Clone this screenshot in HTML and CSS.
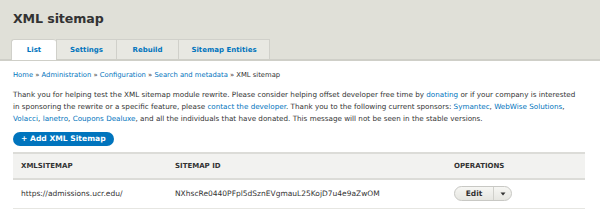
FILE: index.html
```html
<!DOCTYPE html>
<html>
<head>
<meta charset="utf-8">
<link rel="stylesheet" href="styles.css">
</head>
<body>
<header class="head">
  <h1 class="title">XML sitemap</h1>
  <nav class="tabs">
    <a class="tab active">List</a>
    <a class="tab">Settings</a>
    <a class="tab">Rebuild</a>
    <a class="tab">Sitemap Entities</a>
  </nav>
</header>
<main class="content">
  <div class="crumbs"><a>Home</a> » <a>Administration</a> » <a>Configuration</a> » <a>Search and metadata</a> » XML sitemap</div>
  <p class="msg"><span class="ln">Thank you for helping test the XML sitemap module rewrite. Please consider helping offset developer free time by <a>donating</a> or if your company is interested</span><span class="ln">in sponsoring the rewrite or a specific feature, please <a>contact the developer</a>. Thank you to the following current sponsors: <a>Symantec</a>, <a>WebWise Solutions</a>,</span><span class="ln"><a>Volacci</a>, <a>lanetro</a>, <a>Coupons Dealuxe</a>, and all the individuals that have donated. This message will not be seen in the stable versions.</span></p>
  <a class="addbtn">+ Add XML Sitemap</a>
  <table class="grid">
    <thead>
      <tr><th class="c1">XMLSITEMAP</th><th class="c2">SITEMAP ID</th><th class="c3">OPERATIONS</th></tr>
    </thead>
    <tbody>
      <tr>
        <td class="c1">https://admissions.ucr.edu/</td>
        <td class="c2">NXhscRe0440PFpl5dSznEVgmauL25KojD7u4e9aZwOM</td>
        <td class="c3"><span class="drop"><span class="edit">Edit</span><span class="arrow"><svg width="6" height="4" viewBox="0 0 6 4"><path d="M0.5 0.5 L5.5 0.5 L3 3.5 Z" fill="#333"/></svg></span></span></td>
      </tr>
    </tbody>
  </table>
</main>
</body>
</html>
```
FILE: styles.css
```css
* { box-sizing: border-box; }
body {
  margin: 0;
  font-family: "DejaVu Sans", sans-serif;
  color: #333;
  background: #fff;
}
a { color: #0074bd; text-decoration: none; }
.head {
  background: #e0e0d8;
  border-bottom: 2px solid #cfcfc8;
  padding: 10px 0 0 11px;
  height: 61px;
}
.title {
  margin: 0 0 0 2px;
  font-size: 12.6px;
  font-weight: bold;
  line-height: 18px;
  color: #333;
  letter-spacing: -0.1px;
}
.tabs {
  display: flex;
  margin-top: 11px;
}
.tab {
  display: block;
  height: 20px;
  line-height: 21px;
  font-size: 7px;
  font-weight: bold;
  text-align: center;
  background: #e8e8e2;
  border: 1px solid #d0d0ca;
  border-bottom: none;
  border-right: none;
}
.tab:nth-child(1) { width: 45px; background: #fff; border-radius: 3px 3px 0 0; height: 21px; }
.tab:nth-child(2) { width: 60px; }
.tab:nth-child(3) { width: 62px; }
.tab:nth-child(4) { width: 92px; border-right: 1px solid #d0d0ca; }
.content { padding: 8px 16px 0 13px; }
.crumbs { font-size: 6.8px; line-height: 12px; }
.msg {
  margin: 8px 0 0;
  font-size: 7.2px;
  line-height: 12px;
}
.ln { display: block; white-space: nowrap; }
.addbtn {
  display: inline-block;
  margin-top: 7px;
  background: #0074bd;
  color: #fff;
  font-weight: bold;
  font-size: 7.6px;
  line-height: 13px;
  height: 14px;
  padding: 0 8px;
  border-radius: 8px;
}
.grid {
  margin-top: 6px;
  width: 572px;
  border-collapse: collapse;
  font-size: 7.5px;
}
.grid th {
  background: #f2f2f0;
  border-top: 2px solid #dcdcd8;
  border-bottom: 2px solid #dcdcd8;
  height: 26px;
  text-align: left;
  font-weight: bold;
  font-size: 7px;
  padding: 0 8px;
}
.grid td {
  height: 29px;
  border-bottom: 1px solid #e6e6e2;
  padding: 0 8px;
}
.c1 { width: 154px; }
.c2 { width: 279px; }
.drop {
  display: inline-flex;
  height: 15px;
  border: 1px solid #c8c8c4;
  border-radius: 8px;
  background: linear-gradient(#f6f6f3, #e6e6e1);
  align-items: stretch;
  font-weight: bold;
  font-size: 7.5px;
}
.edit {
  width: 39px;
  text-align: center;
  line-height: 13px;
  border-right: 1px solid #d0d0cb;
}
.arrow {
  width: 17px;
  display: flex;
  align-items: center;
  justify-content: center;
}
```
